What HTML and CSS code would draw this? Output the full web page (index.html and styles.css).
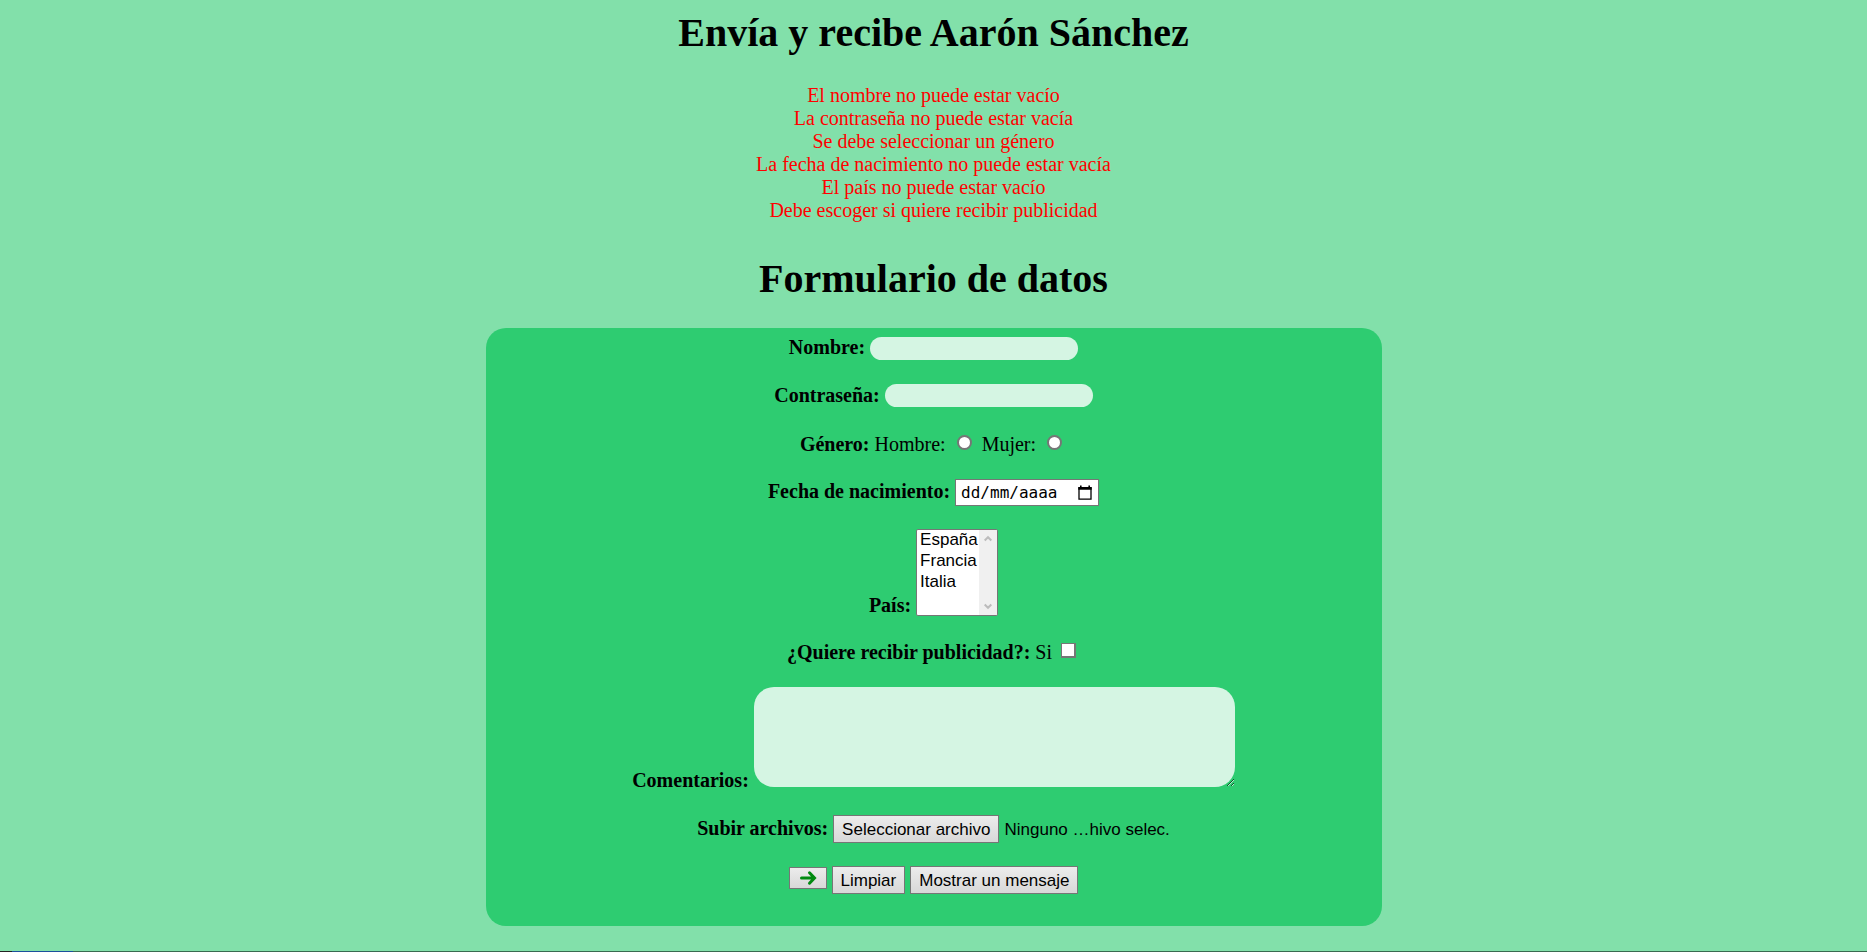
FILE: index.html
```html
<!DOCTYPE html>
<html lang="es">
<head>
<meta charset="utf-8">
<title>Envía y recibe</title>
<link rel="stylesheet" href="styles.css">
</head>
<body>
<main class="page">
  <h1 class="title">Envía y recibe Aarón Sánchez</h1>
  <ul class="errors">
    <li>El nombre no puede estar vacío</li>
    <li>La contraseña no puede estar vacía</li>
    <li>Se debe seleccionar un género</li>
    <li>La fecha de nacimiento no puede estar vacía</li>
    <li>El país no puede estar vacío</li>
    <li>Debe escoger si quiere recibir publicidad</li>
  </ul>
  <h1 class="title">Formulario de datos</h1>
  <form class="form">
    <div class="row">
      <label class="name" for="nombre">Nombre:</label>
      <input class="field" type="text" id="nombre">
    </div>
    <div class="row">
      <label class="name" for="clave">Contraseña:</label>
      <input class="field" type="password" id="clave">
    </div>
    <div class="row">
      <span class="name">Género:</span>
      <label for="hombre">Hombre:</label>
      <input class="radio" type="radio" name="genero" id="hombre">
      <label for="mujer">Mujer:</label>
      <input class="radio" type="radio" name="genero" id="mujer">
    </div>
    <div class="row">
      <label class="name" for="fecha">Fecha de nacimiento:</label>
      <span class="date">
        <input class="date-text" type="text" id="fecha" placeholder="dd/mm/aaaa">
        <svg class="date-icon" viewBox="0 0 14 16" aria-hidden="true"><path d="M1 3h12v11.2H1z" fill="none" stroke="#000" stroke-width="1.3"/><path d="M.3 2h13.4v2.8H.3zM2 .5h1.6V3H2zM10.4.5H12V3h-1.6z"/></svg>
      </span>
    </div>
    <div class="row">
      <label class="name" for="pais">País:</label>
      <span class="list">
        <select class="list-box" id="pais" size="4">
          <option>España</option>
          <option>Francia</option>
          <option>Italia</option>
        </select>
        <span class="scroll" aria-hidden="true">
          <svg class="arrow" viewBox="0 0 8 7"><path d="M.7 5.5 4 2.2l3.3 3.3" fill="none" stroke="#bcbcbc" stroke-width="2"/></svg>
          <svg class="arrow" viewBox="0 0 8 7"><path d="M.7 1.5 4 4.8l3.3-3.3" fill="none" stroke="#bcbcbc" stroke-width="2"/></svg>
        </span>
      </span>
    </div>
    <div class="row">
      <span class="name">¿Quiere recibir publicidad?:</span>
      <label for="publicidad">Si</label>
      <input class="check" type="checkbox" id="publicidad">
    </div>
    <div class="row">
      <label class="name" for="comentarios">Comentarios:</label>
      <textarea class="comments" id="comentarios"></textarea>
    </div>
    <div class="row">
      <span class="name">Subir archivos:</span>
      <label class="button" for="archivo">Seleccionar archivo</label>
      <span class="file-name">Ninguno …hivo selec.</span>
      <input class="file" type="file" id="archivo">
    </div>
    <div class="row">
      <button class="button send" type="submit" aria-label="Enviar"><svg class="send-icon" viewBox="0 0 18 16" aria-hidden="true"><path d="M2.5 8H15M10.5 2.8 15.5 8l-5 5.2" fill="none" stroke="#008a10" stroke-width="3" stroke-linecap="round"/></svg></button>
      <button class="button" type="reset">Limpiar</button>
      <button class="button" type="button">Mostrar un mensaje</button>
    </div>
  </form>
</main>
<footer class="edge"></footer>
</body>
</html>
```
FILE: styles.css
```css
* {
  box-sizing: border-box;
}

body {
  display: flex;
  flex-direction: column;
  min-height: 100vh;
  margin: 0;
  background: #82e0aa;
  color: #000;
  font: 20px/23px "Liberation Serif", "Times New Roman", serif;
  text-align: center;
}

.page {
  padding: 10px 10px 24px;
}

.title {
  margin: 0 0 26px;
  font-size: 40px;
  line-height: 46px;
}

.errors {
  margin: 28px 0 34px;
  padding: 0;
  color: #f00;
  list-style: none;
}

.form {
  position: relative;
  display: grid;
  gap: 23px;
  width: 896px;
  max-width: 100%;
  margin: 0 auto;
  padding: 8px 10px 32px;
  border-radius: 20px;
  background: #2ecc71;
}

.name {
  font-weight: bold;
}

.field,
.comments {
  border: 0;
  background: #d5f5e3;
  font: 17px/19px "Liberation Sans", Arial, sans-serif;
}

.field {
  width: 208px;
  height: 23px;
  margin: 0 0 1px;
  padding: 3px 10px 1px;
  border-radius: 12px;
}

.comments {
  width: 481px;
  max-width: 100%;
  height: 100px;
  padding: 10px;
  border-radius: 20px;
  vertical-align: baseline;
}

.radio,
.check {
  appearance: none;
  width: 15px;
  height: 15px;
  border: 2px solid #767676;
  background: #fff;
}

.radio {
  margin: 4px 5px 1px 6px;
  border-radius: 50%;
}

.check {
  margin: 3px 4px 1px;
  border-width: 1px 2px 2px 1px;
}

.date {
  display: inline-flex;
  align-items: center;
  justify-content: space-between;
  width: 144px;
  height: 27px;
  padding: 0 6px 0 5px;
  border: 1px solid #767676;
  background: #fff;
}

.date-text {
  width: 104px;
  padding: 0;
  border: 0;
  background: none;
  font: 16px/19px "DejaVu Sans Mono", monospace;
}

.date-text::placeholder {
  color: #000;
}

.date-icon {
  width: 14px;
  height: 16px;
}

.list {
  display: inline-flex;
  width: 82px;
  height: 87px;
  overflow: hidden;
  border: 1px solid #767676;
  border-radius: 2px;
  background: #fff;
  vertical-align: text-bottom;
}

.list-box {
  flex: 1;
  min-width: 0;
  padding: 0;
  border: 0;
  background: #fff;
  color: #000;
  font: 17px/20px "Liberation Sans", Arial, sans-serif;
  overflow: hidden;
}

.list-box option {
  min-height: 21px;
  padding: 0 3px;
}

.scroll {
  display: flex;
  flex-direction: column;
  align-items: center;
  justify-content: space-between;
  width: 18px;
  padding: 5px 0;
  background: #f0f0f0;
}

.arrow {
  width: 8px;
  height: 7px;
}

.button {
  display: inline-block;
  padding: 3px 8px 2px;
  border: 1px solid #767676;
  border-radius: 0;
  background: linear-gradient(#ececec, #d8d8d8);
  color: #000;
  font: 17px/21px "Liberation Sans", Arial, sans-serif;
}

.send {
  padding: 2px 9px;
}

.send-icon {
  display: block;
  width: 18px;
  height: 16px;
}

.file-name {
  font: 17px/21px "Liberation Sans", Arial, sans-serif;
}

.file {
  position: absolute;
  width: 1px;
  height: 1px;
  opacity: 0;
}

.edge {
  height: 1px;
  margin-top: auto;
  background: linear-gradient(90deg, #222 0 12px, #1b4f9c 12px 73px, #3a6a50 73px);
}
```
